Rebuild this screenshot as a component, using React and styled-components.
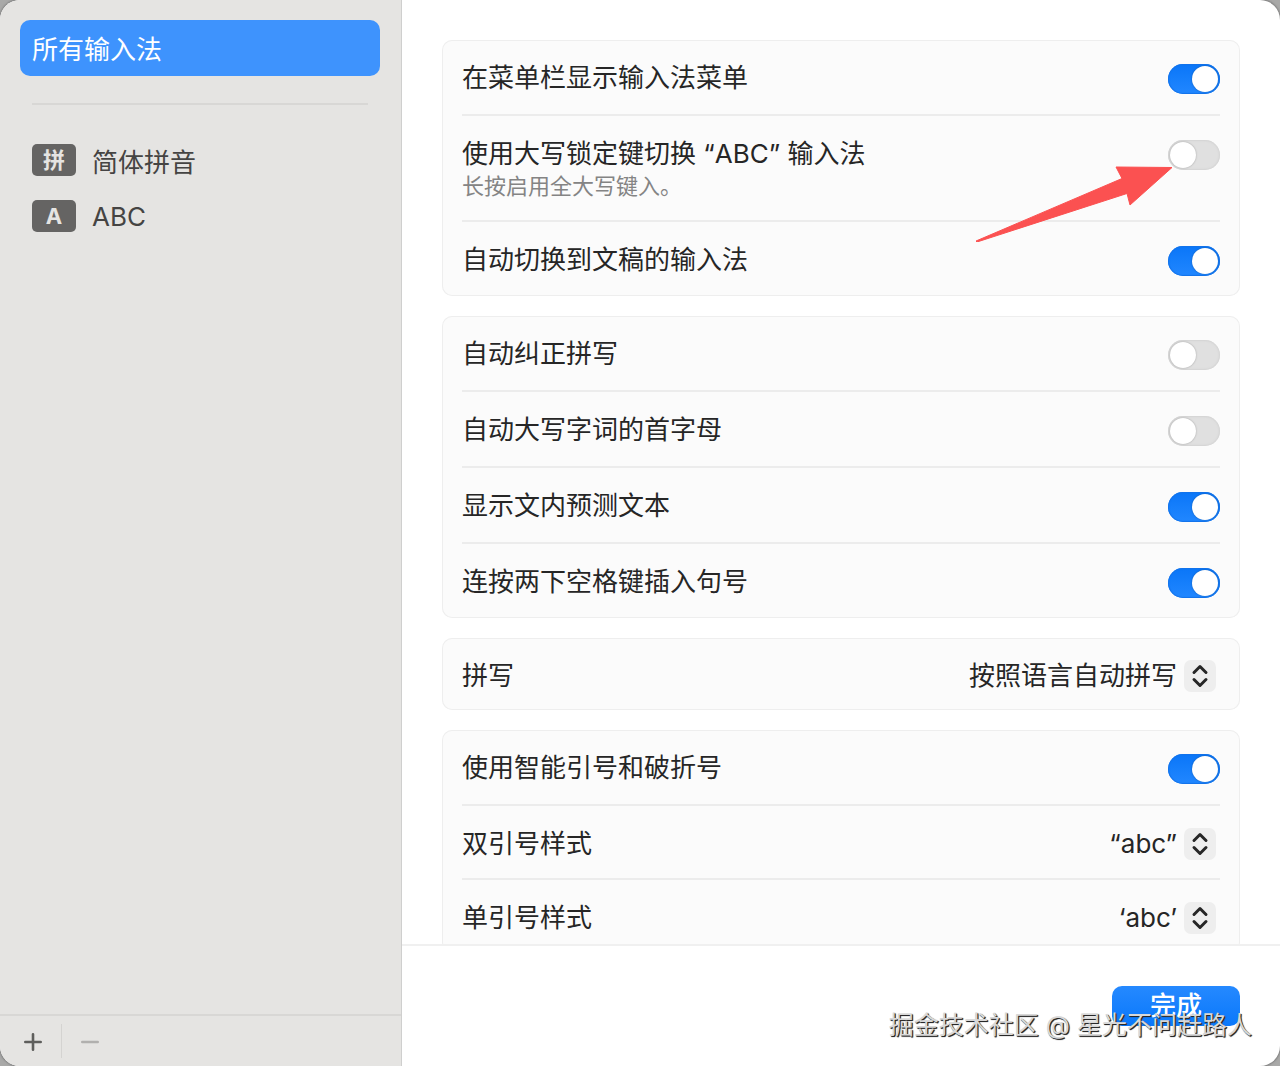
import { useState } from "react";
import styled, { createGlobalStyle } from "styled-components";

const GlobalStyle = createGlobalStyle`
  * {
    box-sizing: border-box;
  }
  body {
    margin: 0;
    background: #a9a9a8;
    font-family: Inter, "Noto Sans CJK SC", sans-serif;
    font-size: 26px;
    color: #262626;
  }
  button, select {
    font: inherit;
    color: inherit;
  }
`;

const sources = [
  { badge: "拼", name: "简体拼音" },
  { badge: "A", name: "ABC" }
];

function ToggleRow({ id, label, hint, on, children }) {
  const [checked, setChecked] = useState(Boolean(on));

  return (
    <Row>
      <RowText>
        <RowLabel htmlFor={id}>{label}</RowLabel>
        {hint && <RowHint>{hint}</RowHint>}
      </RowText>
      <Toggle
        id={id}
        type="checkbox"
        checked={checked}
        onChange={e => setChecked(e.target.checked)}
      />
      {children}
    </Row>
  );
}

function SelectRow({ id, label, options }) {
  return (
    <Row $compact>
      <RowLabel htmlFor={id}>{label}</RowLabel>
      <SelectBox>
        <Select id={id}>
          {options.map(option => (
            <option key={option}>{option}</option>
          ))}
        </Select>
        <Stepper>
          <svg width="32" height="32" viewBox="0 0 32 32" aria-hidden="true">
            <path
              d="M10 12.5 L16 6.5 L22 12.5 M10 19.5 L16 25.5 L22 19.5"
              fill="none"
              stroke="#262626"
              strokeWidth="3"
              strokeLinecap="round"
              strokeLinejoin="round"
            />
          </svg>
        </Stepper>
      </SelectBox>
    </Row>
  );
}

export default function App() {
  return (
    <Window>
      <GlobalStyle />
      <Sidebar>
        <SourceList>
          <AllSources type="button">所有输入法</AllSources>
          <SidebarRule />
          {sources.map(source => (
            <SourceItem key={source.name} type="button">
              <SourceBadge>{source.badge}</SourceBadge>
              {source.name}
            </SourceItem>
          ))}
        </SourceList>
        <SidebarFooter>
          <EditButton type="button" aria-label="添加">
            <svg width="18" height="18" viewBox="0 0 18 18">
              <path
                d="M9 1.3 V16.7 M1.3 9 H16.7"
                stroke="#5e5e5c"
                strokeWidth="2.6"
                strokeLinecap="round"
              />
            </svg>
          </EditButton>
          <FooterRule />
          <EditButton type="button" aria-label="移除" disabled>
            <svg width="18" height="18" viewBox="0 0 18 18">
              <path
                d="M1.3 9 H16.7"
                stroke="#b1b0ae"
                strokeWidth="2.6"
                strokeLinecap="round"
              />
            </svg>
          </EditButton>
        </SidebarFooter>
      </Sidebar>

      <Main>
        <Settings>
          <Card>
            <ToggleRow id="menu" label="在菜单栏显示输入法菜单" on />
            <ToggleRow
              id="caps"
              label="使用大写锁定键切换 “ABC” 输入法"
              hint="长按启用全大写键入。"
            >
              <Arrow width="198" height="76" viewBox="0 0 198 76">
                <path
                  d="M1 75 L147 12.5 L141 1 L197 1.5 L155 39 L152 27.5 L2 76 Z"
                  fill="#fb5151"
                  stroke="#fb5151"
                  strokeLinejoin="round"
                />
              </Arrow>
            </ToggleRow>
            <ToggleRow id="document" label="自动切换到文稿的输入法" on />
          </Card>

          <Card>
            <ToggleRow id="correct" label="自动纠正拼写" />
            <ToggleRow id="capitalize" label="自动大写字词的首字母" />
            <ToggleRow id="predict" label="显示文内预测文本" on />
            <ToggleRow id="period" label="连按两下空格键插入句号" on />
          </Card>

          <Card>
            <SelectRow
              id="spelling"
              label="拼写"
              options={["按照语言自动拼写"]}
            />
          </Card>

          <Card>
            <ToggleRow id="quotes" label="使用智能引号和破折号" on />
            <SelectRow id="double" label="双引号样式" options={["“abc”"]} />
            <SelectRow id="single" label="单引号样式" options={["‘abc’"]} />
          </Card>
        </Settings>

        <Footer>
          <DoneButton type="button">完成</DoneButton>
          <Watermark>掘金技术社区 @ 星光不问赶路人</Watermark>
        </Footer>
      </Main>
    </Window>
  );
}

const Window = styled.div`
  display: flex;
  height: 100vh;
  border-radius: 20px;
  overflow: hidden;
  background: #fff;
  box-shadow: 0 0 2px 1px #7c7c7c;
`;

const Sidebar = styled.aside`
  display: flex;
  flex-direction: column;
  flex: none;
  width: 402px;
  background: #e5e4e2;
  border-right: 1px solid #cfcfce;
`;

const SourceList = styled.nav`
  flex: 1;
  display: flex;
  flex-direction: column;
  padding: 20px 21px 20px 20px;
`;

const AllSources = styled.button`
  height: 56px;
  padding: 0 12px 2px;
  border: none;
  border-radius: 10px;
  background: #3e93fd;
  color: #fff;
  text-align: left;
`;

const SidebarRule = styled.hr`
  width: auto;
  height: 2px;
  margin: 27px 12px;
  border: none;
  background: #d8d7d5;
`;

const SourceItem = styled.button`
  display: flex;
  align-items: center;
  gap: 16px;
  height: 56px;
  padding: 0 12px;
  border: none;
  background: none;
  color: #454443;
`;

const SourceBadge = styled.span`
  display: flex;
  align-items: center;
  justify-content: center;
  width: 44px;
  height: 32px;
  border-radius: 5px;
  background: #656463;
  color: #e5e4e2;
  font-size: 22px;
  font-weight: 700;
  line-height: 30px;
`;

const SidebarFooter = styled.div`
  display: flex;
  align-items: center;
  height: 52px;
  padding: 0 5px;
  border-top: 2px solid #d8d7d5;
`;

const EditButton = styled.button`
  display: flex;
  align-items: center;
  justify-content: center;
  width: 56px;
  height: 50px;
  padding: 2px 0 0;
  border: none;
  background: none;
`;

const FooterRule = styled.span`
  width: 1px;
  height: 34px;
  background: #d4d3d1;
`;

const Main = styled.main`
  flex: 1;
  min-width: 0;
  display: flex;
  flex-direction: column;
`;

const Settings = styled.div`
  flex: 1;
  min-height: 0;
  display: flex;
  flex-direction: column;
  gap: 20px;
  padding: 40px 40px 0;
  overflow-y: auto;
  scrollbar-width: none;
`;

const Card = styled.section`
  flex: none;
  padding: 0 20px;
  border-radius: 10px;
  background: #fbfbfb;
  box-shadow: inset 0 0 0 1px #eeeeee;
`;

const Row = styled.div`
  position: relative;
  display: flex;
  align-items: flex-start;
  justify-content: space-between;
  padding: ${props => (props.$compact ? "21px 0 17px" : "21px 0 19px")};

  & + & {
    border-top: 2px solid #ececec;
  }
`;

const RowText = styled.div`
  display: flex;
  flex-direction: column;
`;

const RowLabel = styled.label`
  line-height: 34px;
`;

const RowHint = styled.span`
  font-size: 22px;
  line-height: 30px;
  color: #848484;
`;

const Toggle = styled.input`
  appearance: none;
  flex: none;
  display: flex;
  width: 52px;
  height: 30px;
  margin: 3px 0 0;
  padding: 2px;
  border-radius: 15px;
  background: #e0e0e0;
  box-shadow: inset 0 0 2px 1px #d3d3d3;

  &::before {
    content: "";
    width: 26px;
    height: 26px;
    border-radius: 50%;
    background: #fff;
    box-shadow: 0 0 2px rgba(0, 0, 0, 0.3);
  }

  &:checked {
    justify-content: flex-end;
    background: linear-gradient(#0a76f8, #2187ff);
    box-shadow: inset 0 0 1px 1px #1273ea;
  }
`;

const SelectBox = styled.div`
  display: grid;
  align-items: center;
  height: 34px;
`;

const Select = styled.select`
  appearance: none;
  grid-area: 1 / 1;
  height: 34px;
  padding: 0 43px 2px 0;
  border: none;
  background: none;
  text-align-last: right;
`;

const Stepper = styled.span`
  grid-area: 1 / 1;
  justify-self: end;
  display: flex;
  margin-right: 4px;
  border-radius: 7px;
  background: #eeeeee;
  pointer-events: none;
`;

// lies over the rows that follow it
const Arrow = styled.svg`
  position: absolute;
  z-index: 1;
  top: 50px;
  right: 47px;
  pointer-events: none;
`;

const Footer = styled.footer`
  position: relative;
  display: flex;
  justify-content: flex-end;
  padding: 40px;
  border-top: 2px solid #f0f0f0;
`;

const DoneButton = styled.button`
  width: 128px;
  height: 40px;
  padding: 0;
  border: none;
  border-radius: 10px;
  background: linear-gradient(#2589ff, #0a78fb);
  color: #fff;
  font-weight: 500;
  line-height: 38px;
`;

const Watermark = styled.span`
  position: absolute;
  right: 28px;
  bottom: 24px;
  font-size: 25px;
  line-height: 34px;
  white-space: nowrap;
  color: #d8d8d8;
  text-shadow: 1px 1px 1px #222, 1px 1px 0 #555;
`;
